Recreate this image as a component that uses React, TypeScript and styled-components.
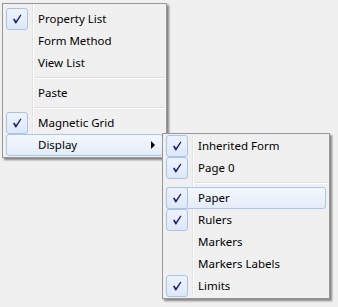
import styled, { createGlobalStyle } from 'styled-components';

const GlobalStyle = createGlobalStyle`
  body {
    background: #f0f0f0;
    color: #000;
    font-family: "Noto Sans", "Open Sans", sans-serif;
    font-size: 11.5px;
    margin: 0;
  }
`;

const StyledDesktop = styled.div`
  box-sizing: border-box;
  height: 307px;
  overflow: hidden;
  padding: 3px 0 0 2px;
  position: relative;
  width: 338px;
`;

const StyledMenu = styled.ul<{ $width: number }>`
  background: linear-gradient(
      to right,
      transparent 0 29px,
      #e2e3e3 29px 30px,
      #ffffff 30px 31px,
      transparent 31px
    ),
    #f0f0f0;
  border: 1px solid #979797;
  box-shadow: 2px 2px 2px rgba(0, 0, 0, 0.45);
  box-sizing: border-box;
  list-style: none;
  margin: 0;
  padding: 1px;
  width: ${({ $width }) => `${$width}px`};
`;

const StyledMainMenu = styled(StyledMenu)`
  padding-top: 4px;
`;

const StyledSubMenu = styled(StyledMenu)`
  left: 100%;
  position: absolute;
  top: -2px;
  z-index: 1;
`;

const StyledItem = styled.li<{ $active?: boolean }>`
  align-items: center;
  background: ${({ $active }) =>
    $active ? 'linear-gradient(#f4f8fd, #e3ecf8)' : 'transparent'};
  border: 1px solid ${({ $active }) => ($active ? '#a9c7ec' : 'transparent')};
  border-radius: 3px;
  box-sizing: border-box;
  display: flex;
  height: 22px;
  margin: 0 2px;
  position: relative;
  white-space: nowrap;
`;

const StyledCheck = styled.span<{ $on: boolean }>`
  align-items: center;
  background: ${({ $on }) => ($on ? 'linear-gradient(#edf3fc, #dde8f7)' : 'transparent')};
  border: 1px solid ${({ $on }) => ($on ? '#a9c4e8' : 'transparent')};
  border-radius: 3px;
  box-sizing: border-box;
  display: flex;
  flex: none;
  height: 22px;
  justify-content: center;
  margin: -1px 0 0 -1px;
  width: 22px;
`;

const StyledLabel = styled.span`
  flex: 1;
  padding: 0 0 2px 10px;
`;

const StyledArrow = styled.span`
  border-bottom: 4px solid transparent;
  border-left: 4px solid #000;
  border-top: 4px solid transparent;
  height: 0;
  margin-right: 7px;
  width: 0;
`;

const StyledSeparator = styled.li`
  height: 8px;
  margin-left: 30px;
  position: relative;
  &::after {
    border-bottom: 1px solid #ffffff;
    border-top: 1px solid #e0e0e0;
    content: '';
    left: 0;
    position: absolute;
    right: 0;
    top: 3px;
  }
`;

const CheckMark = () => (
  <svg width="10" height="10" viewBox="0 0 10 10">
    <path d="M1 5.2 L2.4 4.6 L4 7 L8.4 0.6 L9.4 1.2 L4.2 9.4 L3.4 9.4 Z" fill="#1a1f6b" />
  </svg>
);

type MenuItemProps = {
  label: string;
  checked?: boolean;
  active?: boolean;
  children?: React.ReactNode;
};

const MenuItem = ({ label, checked = false, active, children }: MenuItemProps) => (
  <StyledItem $active={active}>
    <StyledCheck $on={checked}>{checked && <CheckMark />}</StyledCheck>
    <StyledLabel>{label}</StyledLabel>
    {children && <StyledArrow />}
    {children}
  </StyledItem>
);

const DisplayMenu = () => (
  <StyledSubMenu $width={168}>
    <MenuItem label="Inherited Form" checked />
    <MenuItem label="Page 0" checked />
    <StyledSeparator />
    <MenuItem label="Paper" checked active />
    <MenuItem label="Rulers" checked />
    <MenuItem label="Markers" />
    <MenuItem label="Markers Labels" />
    <MenuItem label="Limits" checked />
  </StyledSubMenu>
);

const App = () => (
  <>
    <GlobalStyle />
    <StyledDesktop>
      <StyledMainMenu $width={165}>
        <MenuItem label="Property List" checked />
        <MenuItem label="Form Method" />
        <MenuItem label="View List" />
        <StyledSeparator />
        <MenuItem label="Paste" />
        <StyledSeparator />
        <MenuItem label="Magnetic Grid" checked />
        <MenuItem label="Display" active>
          <DisplayMenu />
        </MenuItem>
      </StyledMainMenu>
    </StyledDesktop>
  </>
);

export default App;
